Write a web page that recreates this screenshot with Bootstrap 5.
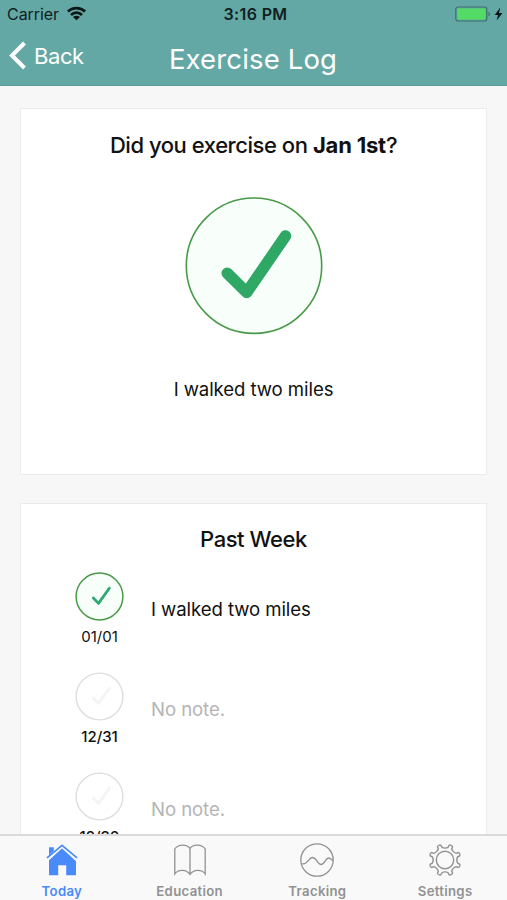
<!DOCTYPE html>
<html lang="en">
<head>
<meta charset="utf-8">
<meta name="viewport" content="width=device-width, initial-scale=1">
<title>Exercise Log</title>
<link rel="stylesheet" href="https://cdn.jsdelivr.net/npm/bootstrap@5.3.0/dist/css/bootstrap.min.css">
<style>
body { font-family: Inter, "Liberation Sans", sans-serif; color: #111; }
svg { display: block; flex: none; overflow: visible; }
.screen { height: 900px; background: #f7f7f7; }
.top { height: 86px; background: #64a8a5; border-bottom: 1px solid #5b9d99; }
.status { height: 28px; padding: 0 4px 0 7px; color: #10201f; }
.status > * { flex: 1 1 0; }
.carrier { font-size: 16px; line-height: 27px; letter-spacing: -.05px; }
.clock { font-size: 16px; line-height: 27px; font-weight: 600; letter-spacing: .35px; padding-left: 1px; }
.titlebar { display: grid; grid-template-columns: 1fr auto 1fr; height: 57px; padding-left: 9px; padding-right: 10px; }
.back { font-size: 22px; line-height: 28px; gap: 8px; padding-top: 14px; letter-spacing: -.4px; }
.title { font-size: 27.5px; line-height: 32px; padding-top: 15px; letter-spacing: .15px; }
.content { padding: 22px 20px 0; gap: 27px; min-height: 0; }
.panel { border: 1px solid #ebebeb; background: #fff; flex: none; }
.panel-today { height: 367px; padding-top: 20px; }
.panel-week { height: 460px; padding-top: 19px; margin-top: 1px; }
.heading { font-size: 22px; line-height: 32px; font-weight: 500; letter-spacing: -.45px; }
.heading b { font-weight: 700; letter-spacing: -.2px; }
.big-check { margin-top: 36px; }
.note { font-size: 18.6px; line-height: 28px; letter-spacing: -.08px; }
.panel-today .note { margin-top: 40px; }
.days { padding-top: 17px; }
.day { height: 100px; padding-left: 54px; gap: 27px; }
.date { font-size: 15px; line-height: 20px; margin-top: 6px; letter-spacing: 0; }
.day .note { padding-top: 23px; }
.empty { color: #b4b4b4; }
.tabs { height: 66px; background: #f9f9f9; border-top: 2px solid #dadada; margin: 0 -2px; }
.tabs a { flex: 1 1 0; color: #929292; font-size: 13.2px; line-height: 18px; font-weight: 600; padding-top: 7px; gap: 5px; letter-spacing: .3px; }
.tabs a.current { color: #4a8bfb; }
</style>
<script src="https://cdn.jsdelivr.net/npm/bootstrap@5.3.0/dist/js/bootstrap.bundle.min.js"></script>
</head>
<body>
<div class="screen d-flex flex-column overflow-hidden">
  <header class="top flex-shrink-0">
    <div class="status d-flex align-items-center">
      <div class="d-flex align-items-center gap-2">
        <span class="carrier">Carrier</span>
        <svg width="19" height="14" viewBox="0 0 19 14" fill="none" stroke="#0b1716" stroke-width="2.8"><path d="M.9 4.6C5.7-.1 13.3-.1 18.1 4.6M4 7.9C7.1 4.9 11.9 4.9 15 7.9"/><path d="M9.5 13.3 6 10C8 8.2 11 8.2 13 10Z" fill="#0b1716" stroke="none"/></svg>
      </div>
      <div class="clock text-center">3:16 PM</div>
      <div class="d-flex justify-content-end">
        <svg width="49" height="16" viewBox="0 0 49 16"><rect x="1.8" y="1" width="31" height="14" rx="2.5" fill="none" stroke="#3e6e6b" stroke-width="1.2"/><rect x="3.2" y="2.4" width="28.2" height="11.2" rx="1" fill="#53db66"/><path d="M34.5 5.4q2.8 2.6 0 5.2z" fill="#3e6e6b"/><path d="M46.3 1.6 40.7 8.9H44L42.7 14.6 48.5 7H45Z" fill="#0b1716"/></svg>
      </div>
    </div>
    <div class="titlebar text-white">
      <a href="#" class="back d-flex align-items-start text-white text-decoration-none">
        <svg width="17" height="28" viewBox="0 0 17 28" fill="none" stroke="#fff" stroke-width="4"><path d="M15.5 1 3 13.5 15.5 26"/></svg>
        <span>Back</span>
      </a>
      <div class="title">Exercise Log</div>
    </div>
  </header>

  <main class="content d-flex flex-column flex-grow-1 overflow-hidden">
    <section class="panel panel-today d-flex flex-column align-items-center">
      <div class="heading">Did you exercise on <b>Jan 1st</b>?</div>
      <svg class="big-check" width="138" height="138" viewBox="0 0 138 138"><circle cx="69" cy="68.7" r="67.7" fill="#f8fffb" stroke="#489a48" stroke-width="1.6"/><path d="M42.2 76.2 61.7 95.5 100.5 39" fill="none" stroke="#2fa866" stroke-width="11.5" stroke-linecap="round" stroke-linejoin="round"/></svg>
      <div class="note">I walked two miles</div>
    </section>

    <section class="panel panel-week">
      <div class="heading text-center">Past Week</div>
      <div class="days">
        <div class="day d-flex">
          <div class="d-flex flex-column align-items-center">
            <svg width="49" height="49" viewBox="0 0 49 49"><circle cx="24.5" cy="24.5" r="23.4" fill="#f8fffb" stroke="#489a48" stroke-width="1.5"/><path d="m18.3 26 5.2 5.4L34.3 16.2" fill="none" stroke="#2fa873" stroke-width="2.8" stroke-linecap="round" stroke-linejoin="round"/></svg>
            <div class="date">01/01</div>
          </div>
          <div class="note">I walked two miles</div>
        </div>
        <div class="day d-flex">
          <div class="d-flex flex-column align-items-center">
            <svg width="49" height="49" viewBox="0 0 49 49"><circle cx="24.5" cy="24.5" r="23.4" fill="#fff" stroke="#dedede" stroke-width="1.4"/><path d="m18.3 26 5.2 5.4L34.3 16.2" fill="none" stroke="#f4f4f4" stroke-width="2.8" stroke-linecap="round" stroke-linejoin="round"/></svg>
            <div class="date fw-medium">12/31</div>
          </div>
          <div class="note empty">No note.</div>
        </div>
        <div class="day d-flex">
          <div class="d-flex flex-column align-items-center">
            <svg width="49" height="49" viewBox="0 0 49 49"><circle cx="24.5" cy="24.5" r="23.4" fill="#fff" stroke="#dedede" stroke-width="1.4"/><path d="m18.3 26 5.2 5.4L34.3 16.2" fill="none" stroke="#f4f4f4" stroke-width="2.8" stroke-linecap="round" stroke-linejoin="round"/></svg>
            <div class="date fw-medium">12/30</div>
          </div>
          <div class="note empty">No note.</div>
        </div>
      </div>
    </section>
  </main>

  <nav class="tabs d-flex flex-shrink-0">
    <a href="#" class="current d-flex flex-column align-items-center text-decoration-none">
      <svg width="34" height="34" viewBox="0 0 34 34"><path d="M17 5.2 31 18.2V32.2H21.2V22.2H13.2V32.2H4V17.2Z" fill="#4a8bfb"/><path d="M2 16 17 2.7 32 16" fill="none" stroke="#f9f9f9" stroke-width="3.2"/><path d="M4 4.2H8.8V8L4 12.2Z" fill="#4a8bfb"/><path d="M2 14.8 17 2.3 32 14.8" fill="none" stroke="#4a8bfb" stroke-width="1.7"/></svg>
      <span>Today</span>
    </a>
    <a href="#" class="d-flex flex-column align-items-center text-decoration-none">
      <svg width="34" height="34" viewBox="0 0 34 34" fill="none" stroke="#929292" stroke-width="1.3"><path d="M17 5.5C14 .8 5 1 1.800 6V31C5 26.200 13.500 26.200 17 31.500 20.500 26.200 29 26.200 32.200 31V6C29 1 20 .8 17 5.500V31.500"/></svg>
      <span>Education</span>
    </a>
    <a href="#" class="d-flex flex-column align-items-center text-decoration-none">
      <svg width="34" height="34" viewBox="0 0 34 34" fill="none" stroke="#929292" stroke-width="1.3"><circle cx="17" cy="17" r="16.2"/><path d="M1.4 20.5C7 23 8.500 14.500 12.500 14.500S17.500 21.500 21 21.500 25.500 15 28.500 15C31 15 31.500 17 33 17.500"/></svg>
      <span>Tracking</span>
    </a>
    <a href="#" class="d-flex flex-column align-items-center text-decoration-none">
      <svg width="34" height="34" viewBox="-17 -17 34 34" fill="none" stroke="#929292" stroke-width="1.4"><circle r="8.7"/>
        <defs><path id="cog" d="M-6.1-14.7C-4.5-15.35-3.9-14.8-3.7-13.8-3.2-11.2 3.2-11.2 3.7-13.8 3.9-14.8 4.5-15.35 6.1-14.7"/></defs>
        <use href="#cog"/><use href="#cog" transform="rotate(45)"/><use href="#cog" transform="rotate(90)"/><use href="#cog" transform="rotate(135)"/><use href="#cog" transform="rotate(180)"/><use href="#cog" transform="rotate(225)"/><use href="#cog" transform="rotate(270)"/><use href="#cog" transform="rotate(315)"/></svg>
      <span>Settings</span>
    </a>
  </nav>
</div>
</body>
</html>
